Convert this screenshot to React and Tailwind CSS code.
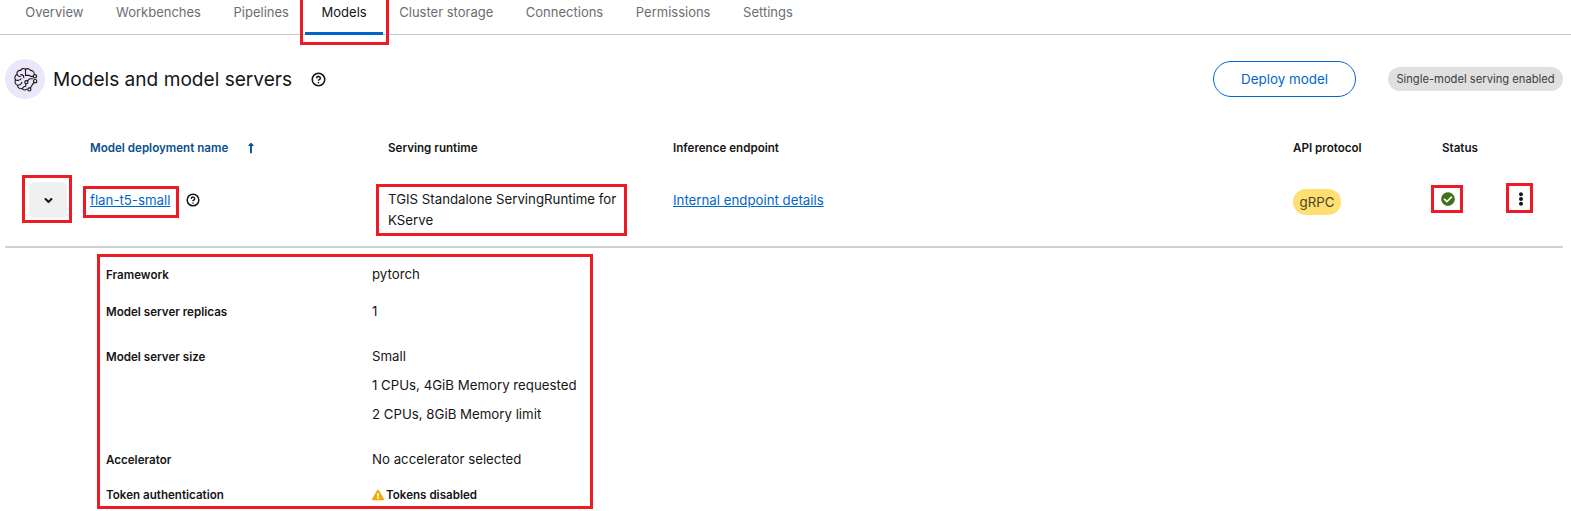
import React from 'react';
import { CircleHelp } from 'lucide-react';
import {
  FaAngleDown,
  FaCheckCircle,
  FaEllipsisV,
  FaExclamationTriangle,
  FaLongArrowAltUp,
} from 'react-icons/fa';

const tabs = ['Overview', 'Workbenches', 'Pipelines', 'Models', 'Cluster storage', 'Connections', 'Permissions', 'Settings'];

// Brain with circuit nodes on its right side
const BrainIcon = () => (
  <svg viewBox="0 0 24 24" className="w-[29px] h-[29px]" fill="none" stroke="#151515" strokeWidth="0.9" strokeLinecap="round" strokeLinejoin="round">
    <path d="M12 3.6C10.6 2.4 8.6 2.9 8 4.5C6 4.2 4.5 6 5 7.8C3.2 8.5 2.6 10.8 3.8 12.3C2.8 14 3.6 16.2 5.4 16.7C5.4 18.8 7.5 20.2 9.3 19.4C10.2 20.9 12 21 13 20" />
    <path d="M12 3.6C13.5 2.5 15.5 3 16 4.5C17.5 4.3 19 5.4 19.2 7" />
    <path d="M12 3.6V8.6" />
    <path d="M8 8C9.6 8 10.6 9 10.6 10.6" />
    <path d="M5 7.8C5.6 9 6.6 9.6 7.6 9.6" />
    <path d="M3.8 12.3C5.4 13.2 7.6 12.6 8.4 11.4" />
    <path d="M5.4 16.7C6.6 16.8 8.6 16 9 14.4" />
    <path d="M9.3 19.4C9.9 18.4 11 17.6 12.2 17.6V15.4" />
    <path d="M12 8.6H15.2L16.2 9.4H18.4" />
    <circle cx="19.8" cy="9.4" r="1.4" />
    <path d="M13.6 13.2L15.4 11.4H18" />
    <circle cx="12.7" cy="14.2" r="1.3" />
    <path d="M16 19L18.8 14.6" />
    <circle cx="15.2" cy="20.2" r="1.3" />
    <circle cx="20" cy="13.4" r="1.4" />
  </svg>
);

const App = () => {
  return (
    <div className="relative w-[1571px] h-[511px] overflow-hidden bg-white text-[#151515] font-['Inter',sans-serif] text-[13.25px]">
      {/* Tabs */}
      <nav className="flex h-[35px] pl-[9px] border-b border-[#c7c7c7] text-[13px]">
        {tabs.map((tab) => (
          <div
            key={tab}
            className={
              tab === 'Models'
                ? 'h-[35px] px-[16.3px] pt-[3px] leading-[18px] border-b-[3px] border-[#0066cc] text-[#151515]'
                : 'h-[34px] px-[16.3px] pt-[3px] leading-[18px] text-[#6a6e73]'
            }
          >
            {tab}
          </div>
        ))}
      </nav>

      {/* Section header */}
      <header className="flex items-center h-[40px] mt-[24px] pl-[5px] pr-[8px]">
        <div className="flex items-center justify-center w-[40px] h-[40px] rounded-full bg-[#ece6fb]">
          <BrainIcon />
        </div>
        <h2 className="ml-[8px] text-[19.1px] leading-[28px]">Models and model servers</h2>
        <CircleHelp className="ml-[19px] w-[15px] h-[15px]" strokeWidth={2.5} />
        <button className="ml-auto w-[143px] h-[36px] rounded-full border border-[#0066cc] text-[#0066cc] text-[13.4px]">
          Deploy model
        </button>
        <span className="ml-[32px] h-[24px] w-[175px] rounded-full bg-[#e0e0e0] text-[11.2px] leading-[24px] text-center text-[#3c3f42]">
          Single-model serving enabled
        </span>
      </header>

      {/* Table head */}
      <div className="grid grid-cols-[90px_298px_285px_620px_149px_1fr] mt-[40px] text-[11.6px] font-semibold leading-[18px]">
        <div />
        <div className="flex items-center text-[#0a4f8f]">
          Model deployment name
          <FaLongArrowAltUp className="ml-[17px] w-[12px] h-[12px]" />
        </div>
        <div>Serving runtime</div>
        <div>Inference endpoint</div>
        <div>API protocol</div>
        <div>Status</div>
      </div>

      {/* Row */}
      <div className="grid grid-cols-[85px_298px_285px_620px_148px_1fr] h-[91px] ml-[5px] mr-[8px] border-b-2 border-[#d2d2d2]">
        <div className="pl-[24px] pt-[25px]">
          <button className="flex items-center justify-center w-[38px] h-[36px] rounded-[6px] bg-[#f0f0f0]">
            <FaAngleDown className="w-[13px] h-[13px]" />
          </button>
        </div>
        <div className="flex items-start pt-[33px]">
          <a className="text-[#0066cc] underline leading-[20px]">flan-t5-small</a>
          <CircleHelp className="ml-[16px] mt-[3px] w-[14px] h-[14px]" strokeWidth={2.5} />
        </div>
        <div className="w-[240px] pt-[32px] leading-[21px]">TGIS Standalone ServingRuntime for KServe</div>
        <div className="pt-[33px] leading-[20px]">
          <a className="text-[#0066cc] underline">Internal endpoint details</a>
        </div>
        <div className="pt-[32px]">
          <span className="inline-block w-[48px] h-[26px] rounded-full bg-[#ffdf71] text-center leading-[26px] text-[#4a4321]">gRPC</span>
        </div>
        <div className="flex pt-[35px]">
          <FaCheckCircle className="w-[14px] h-[14px] text-[#3d7317]" />
          <FaEllipsisV className="ml-[59px] w-[14px] h-[14px]" />
        </div>
      </div>

      {/* Expanded details */}
      <dl className="grid grid-cols-[266px_1fr] ml-[106px] mt-[17px] leading-[20px]">
        <dt className="text-[11.6px] font-semibold">Framework</dt>
        <dd className="leading-[18px]">pytorch</dd>
        <dt className="mt-[17px] text-[11.6px] font-semibold">Model server replicas</dt>
        <dd className="mt-[17px] leading-[18px]">1</dd>
        <dt className="mt-[25px] text-[11.6px] font-semibold">Model server size</dt>
        <dd className="mt-[25px] flex flex-col gap-[11px] leading-[18px]">
          <span>Small</span>
          <span>1 CPUs, 4GiB Memory requested</span>
          <span>2 CPUs, 8GiB Memory limit</span>
        </dd>
        <dt className="mt-[27px] text-[11.6px] font-semibold">Accelerator</dt>
        <dd className="mt-[27px] leading-[18px]">No accelerator selected</dd>
        <dt className="mt-[15px] text-[11.6px] font-semibold">Token authentication</dt>
        <dd className="mt-[15px] flex items-center gap-[2px] text-[11.6px] font-semibold">
          <FaExclamationTriangle className="w-[12px] h-[12px] text-[#f0ab00]" />
          Tokens disabled
        </dd>
      </dl>

      {/* Red annotation boxes drawn over the screenshot */}
      <div className="absolute left-[300px] top-[-4px] w-[89px] h-[49px] border-[3px] border-[#ed1c24]" />
      <div className="absolute left-[22px] top-[175px] w-[50px] h-[48px] border-[3px] border-[#ed1c24]" />
      <div className="absolute left-[83px] top-[186px] w-[96px] h-[32px] border-[3px] border-[#ed1c24]" />
      <div className="absolute left-[376px] top-[184px] w-[251px] h-[52px] border-[3px] border-[#ed1c24]" />
      <div className="absolute left-[1431px] top-[185px] w-[32px] h-[28px] border-[3px] border-[#ed1c24]" />
      <div className="absolute left-[1506px] top-[183px] w-[27px] h-[30px] border-[3px] border-[#ed1c24]" />
      <div className="absolute left-[97px] top-[254px] w-[496px] h-[255px] border-[3px] border-[#ed1c24]" />
    </div>
  );
};

export default App;
